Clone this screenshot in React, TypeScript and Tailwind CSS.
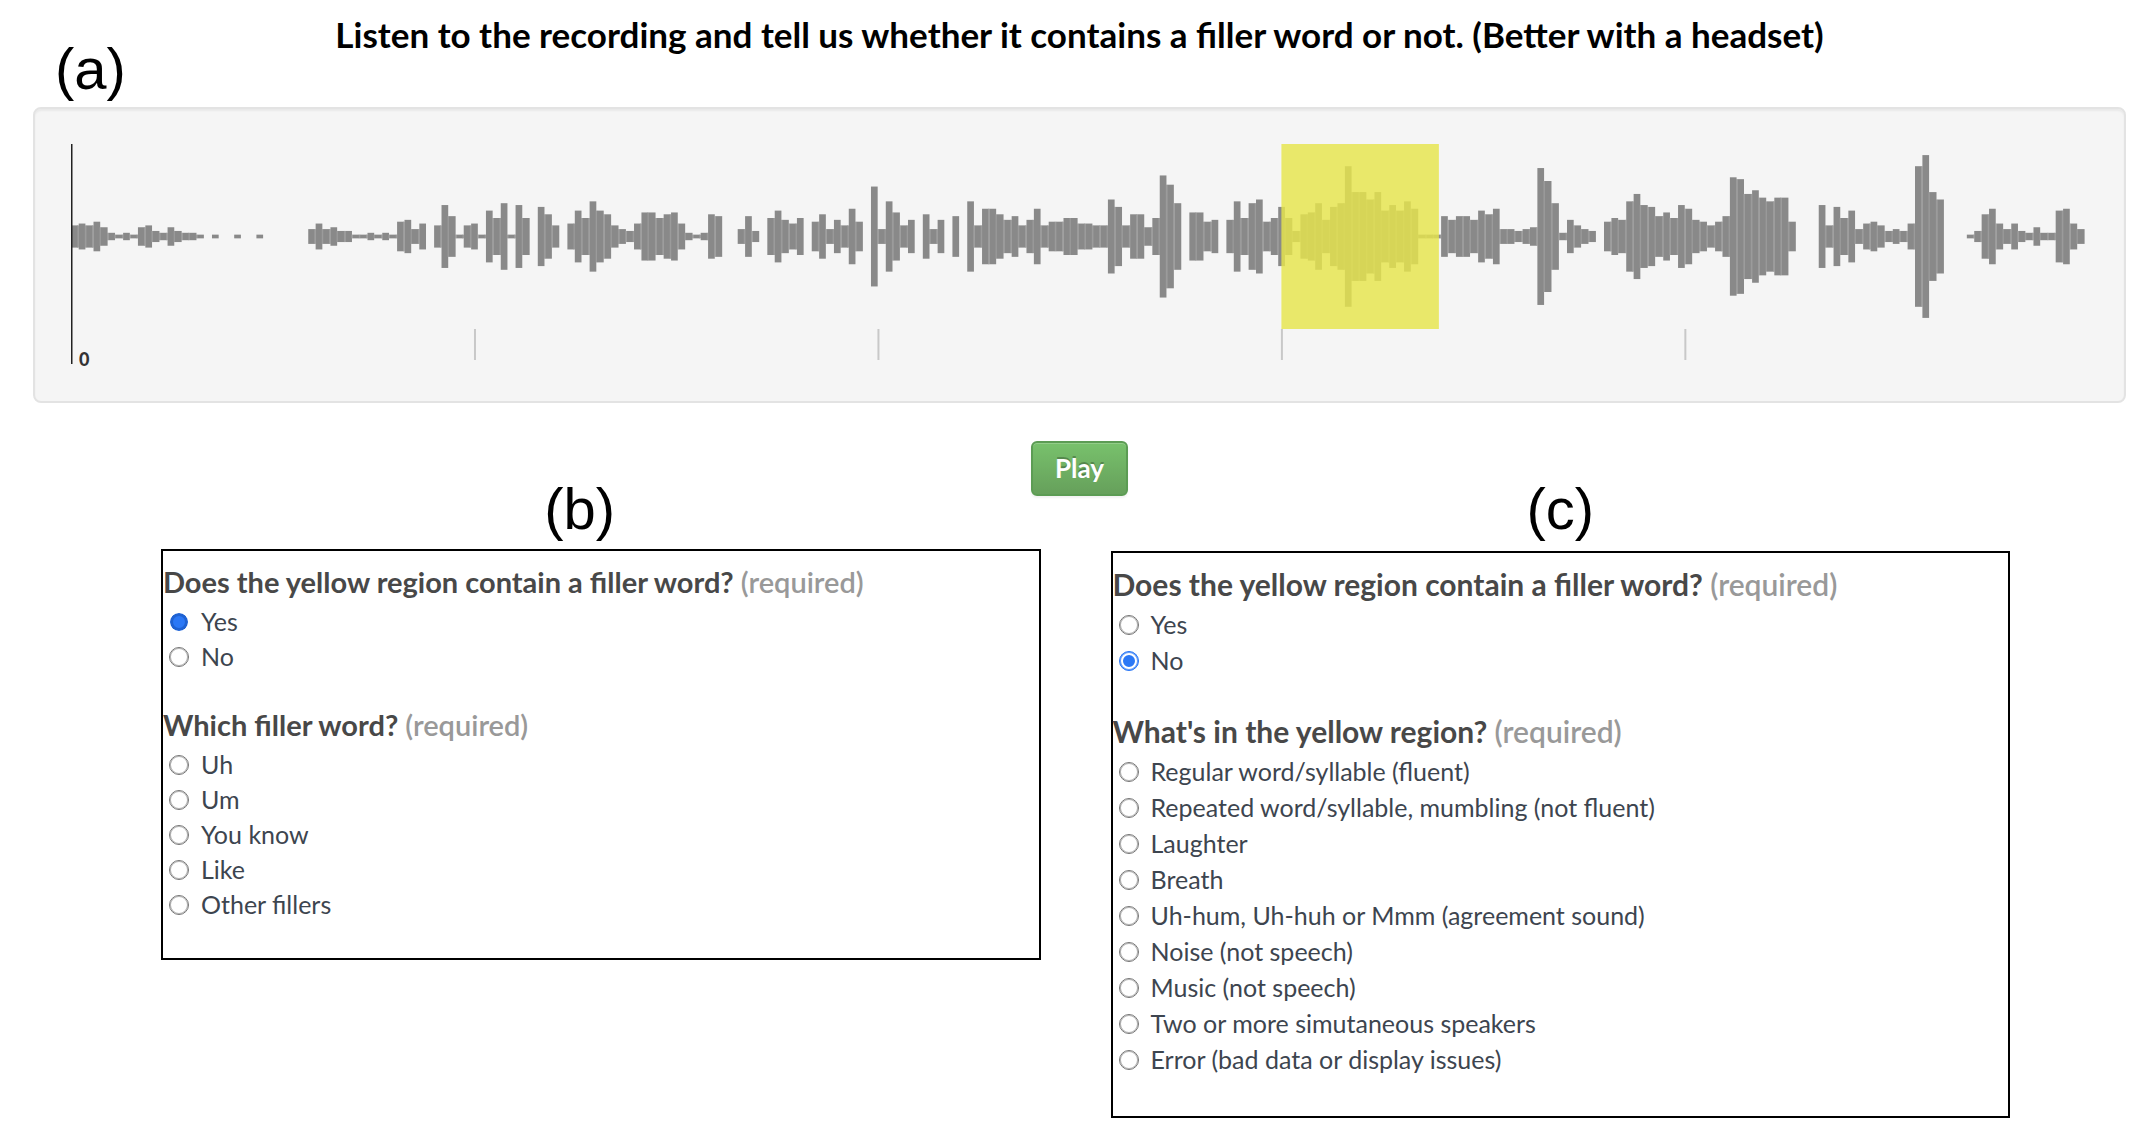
import { useState } from 'react';

/* Half-height of every bar of the recording, in amplitude steps. */
const AMPLITUDES = [
  6, 7, 6, 8, 5, 2, 1, 2, 1, 5, 6, 3, 2, 5, 3, 2, 2, 1, 0, 1, 0, 0, 1, 0, 0, 1, 0, 0, 0, 0, 0, 0,
  4, 7, 4, 5, 3, 3, 1, 1, 2, 1, 2, 1, 8, 9, 4, 7, 0, 6, 17, 11, 1, 6, 7, 1, 14, 10, 18, 1, 17, 10,
  0, 16, 12, 6, 0, 7, 14, 10, 19, 14, 12, 6, 4, 3, 7, 13, 13, 10, 12, 13, 7, 2, 1, 2, 12, 11, 0, 0,
  4, 11, 3, 0, 10, 14, 9, 7, 10, 0, 8, 12, 4, 9, 6, 15, 8, 0, 27, 4, 19, 13, 6, 9, 0, 12, 4, 9, 0,
  11, 0, 19, 6, 15, 15, 12, 9, 11, 6, 9, 15, 6, 8, 8, 10, 10, 7, 7, 6, 6, 20, 16, 6, 12, 12, 5, 10,
  33, 28, 18, 0, 13, 13, 8, 9, 0, 9, 19, 10, 18, 20, 8, 10, 16, 10, 3, 12, 13, 18, 9, 16, 18, 38,
  24, 24, 20, 24, 14, 17, 14, 19, 15, 1, 1, 1, 11, 9, 11, 11, 9, 14, 12, 15, 4, 4, 3, 4, 5, 37, 30,
  18, 2, 9, 6, 4, 3, 0, 8, 10, 9, 19, 23, 17, 16, 11, 13, 10, 17, 15, 9, 8, 6, 8, 11, 32, 31, 23,
  25, 21, 19, 21, 21, 8, 0, 0, 0, 17, 6, 16, 10, 14, 4, 7, 8, 6, 3, 4, 3, 7, 38, 44, 24, 20, 0, 0,
  0, 1, 3, 12, 15, 7, 4, 7, 3, 2, 5, 2, 2, 14, 15, 7, 4,
];

const PITCH = 7.405;
const STEP = 1.85;
const MIDDLE = 92.5;
const WIDTH = AMPLITUDES.length * PITCH;
const TICKS = [403.5, 807, 1210.5, 1614];

function Waveform() {
  return (
    <svg
      className="block h-[220px] w-full"
      viewBox={`0 0 ${WIDTH} 220`}
      preserveAspectRatio="none"
      role="img"
      aria-label="Waveform of the recording"
    >
      {AMPLITUDES.map((a, i) => {
        const next = Math.min(a, AMPLITUDES[i + 1] ?? 0);
        return (
          <g key={i}>
            {a > 0 && (
              <rect x={i * PITCH + 0.3} y={MIDDLE - a * STEP} width={6.7} height={a * STEP * 2} fill="#898989" />
            )}
            {next > 0 && (
              <rect x={i * PITCH + 6.4} y={MIDDLE - next * STEP} width={1.5} height={next * STEP * 2} fill="#9b9b9b" />
            )}
          </g>
        );
      })}
      <rect x={1210.5} y={0} width={157.5} height={185} fill="#e6e54c" fillOpacity={0.82} />
      {TICKS.map((x) => (
        <rect key={x} x={x - 0.5} y={185} width={2} height={31} fill="#c8c8c8" />
      ))}
      <rect x={-0.5} y={0} width={2} height={220} fill="#222222" />
    </svg>
  );
}

type RadioProps = {
  name: string;
  label: string;
  checked: boolean;
  pressed: boolean;
  rowClass: string;
  onSelect: () => void;
};

function Radio({ name, label, checked, pressed, rowClass, onSelect }: RadioProps) {
  const look = !checked
    ? 'border-[#767676] bg-white shadow-[inset_0_0_0_1px_#b4b4b4]'
    : pressed
      ? 'border-white bg-[#2b78f6] bg-clip-padding shadow-[inset_0_0_0_3px_#1f62d2]'
      : 'border-[#2b78f6] bg-[#2b78f6] shadow-[inset_0_0_0_1px_#5b97f8,inset_0_0_0_3px_#fff]';
  return (
    <label className={`flex items-center gap-3 pl-1.5 text-[25px] ${rowClass}`}>
      <input
        type="radio"
        name={name}
        checked={checked}
        onChange={onSelect}
        className={`size-5 shrink-0 appearance-none rounded-full border ${look}`}
      />
      <span>{label}</span>
    </label>
  );
}

type QuestionProps = {
  name: string;
  title: string;
  options: string[];
  initial?: string;
  pressed?: boolean;
  titleClass: string;
  rowClass: string;
};

function Question({ name, title, options, initial = '', pressed = false, titleClass, rowClass }: QuestionProps) {
  const [value, setValue] = useState(initial);
  return (
    <fieldset>
      <legend className={`leading-[38px] font-bold text-[#484848] ${titleClass}`}>
        {title} <span className="font-semibold text-[#999999]">(required)</span>
      </legend>
      {options.map((o) => (
        <Radio
          key={o}
          name={name}
          label={o}
          checked={value === o}
          pressed={pressed}
          rowClass={rowClass}
          onSelect={() => setValue(o)}
        />
      ))}
    </fieldset>
  );
}

const B_TITLE = 'pb-[3px] text-[29px]';
const B_ROW = 'h-[35px]';
const C_TITLE = 'pb-1 text-[30px]';
const C_ROW = 'h-9';
const FIGURE_LABEL = "font-['Liberation_Sans',Arial,sans-serif] text-[58px] leading-[60px] text-black";

export default function App() {
  return (
    <main className="bg-white pr-5 pl-[33px] font-[Lato,sans-serif] text-[#3d454f]">
      <header className="grid grid-cols-[1fr_auto_1fr] pb-2">
        <span className={`self-end pt-[39px] pl-[22px] ${FIGURE_LABEL}`}>(a)</span>
        <h1 className="pt-2.5 text-[35px] leading-[48px] font-bold text-black">
          Listen to the recording and tell us whether it contains a filler word or not. (Better with a headset)
        </h1>
      </header>

      <section className="rounded-lg border-2 border-[#e3e3e3] bg-[#f5f5f5] pt-[35px] pr-[39px] pb-[37px] pl-9 shadow-[inset_0_2px_2px_rgba(0,0,0,0.05)]">
        <div className="relative">
          <Waveform />
          <span className="absolute -bottom-1 left-2 text-lg leading-none font-black text-[#333333]">0</span>
        </div>
      </section>

      <div className="mt-[38px] flex justify-center">
        <button
          type="button"
          className="h-[55px] rounded-md border-2 border-[#5c9c54] bg-linear-to-b from-[#78c16c] to-[#66a05b] px-[22px] text-[26px] font-bold text-white shadow-[inset_0_1px_0_rgba(255,255,255,0.2),0_2px_2px_rgba(0,0,0,0.05)] [text-shadow:0_-2px_0_rgba(0,0,0,0.25)]"
        >
          Play
        </button>
      </div>

      <div className="-mt-[17px] flex items-start gap-[70px] pr-[116px] pl-32">
        <section className="flex-[880]">
          <h2 className={`pr-[42px] pb-2.5 text-center ${FIGURE_LABEL}`}>(b)</h2>
          <form className="flex flex-col gap-8 border-2 border-black pt-3 pb-9">
            <Question
              name="b-filler"
              title="Does the yellow region contain a filler word?"
              options={['Yes', 'No']}
              initial="Yes"
              pressed
              titleClass={B_TITLE}
              rowClass={B_ROW}
            />
            <Question
              name="b-which"
              title="Which filler word?"
              options={['Uh', 'Um', 'You know', 'Like', 'Other fillers']}
              titleClass={B_TITLE}
              rowClass={B_ROW}
            />
          </form>
        </section>
        <section className="flex-[900]">
          <h2 className={`pb-3 text-center ${FIGURE_LABEL}`}>(c)</h2>
          <form className="flex flex-col gap-[33px] border-2 border-black pt-3 pb-[38px]">
            <Question
              name="c-filler"
              title="Does the yellow region contain a filler word?"
              options={['Yes', 'No']}
              initial="No"
              titleClass={C_TITLE}
              rowClass={C_ROW}
            />
            <Question
              name="c-what"
              title="What's in the yellow region?"
              options={[
                'Regular word/syllable (fluent)',
                'Repeated word/syllable, mumbling (not fluent)',
                'Laughter',
                'Breath',
                'Uh-hum, Uh-huh or Mmm (agreement sound)',
                'Noise (not speech)',
                'Music (not speech)',
                'Two or more simutaneous speakers',
                'Error (bad data or display issues)',
              ]}
              titleClass={C_TITLE}
              rowClass={C_ROW}
            />
          </form>
        </section>
      </div>
    </main>
  );
}
